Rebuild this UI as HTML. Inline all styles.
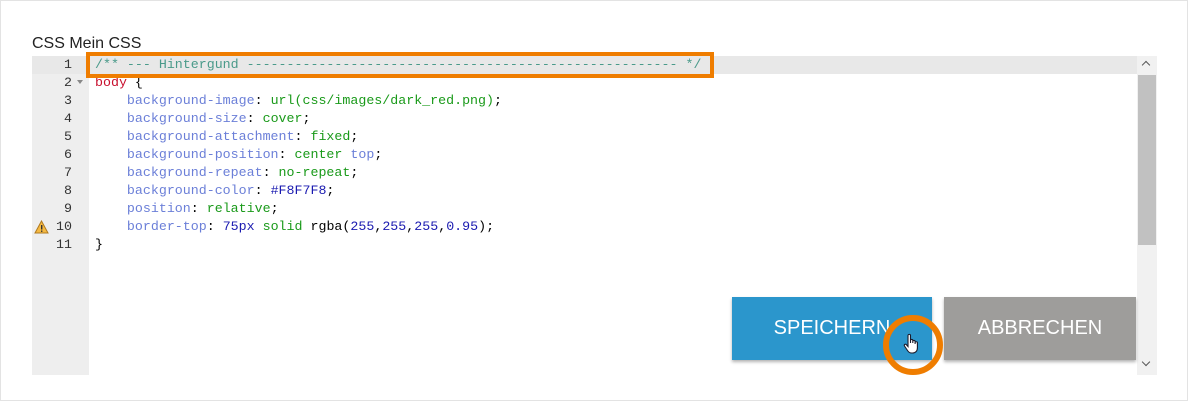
<!DOCTYPE html>
<html><head><style>
body{margin:0;width:1189px;height:402px;background:#fff;position:relative;overflow:hidden;font-family:"Liberation Sans",sans-serif}
.outer{position:absolute;left:0;top:0;width:1186px;height:399px;border:1px solid #e3e3e3}
.title{position:absolute;left:32px;top:35px;font-size:16px;color:#222}
.ed{position:absolute;left:32px;top:56px;width:1125px;height:319px;background:#fff}
.gut{position:absolute;left:0;top:0;width:57px;height:319px;background:#eee}
.hl{position:absolute;left:0;top:0;width:1105px;height:18px;background:#e8e8e8}
.ln{position:absolute;left:0;width:40px;text-align:right;font:13.3px/18px "Liberation Mono",monospace;color:#333}
.code{position:absolute;left:63px;top:0;font:13.3px/18px "Liberation Mono",monospace;white-space:pre;color:#000}
.c{color:#4a9a8a}.k{color:#c8102e}.p{color:#6b7fd8}.v{color:#1a9a1a}.n{color:#1a1ab0}
.sb{position:absolute;left:1105px;top:0;width:20px;height:319px;background:#f1f1f1}
.th{position:absolute;left:1px;top:19px;width:18px;height:170px;background:#c1c1c1}
.btn{position:absolute;top:297px;height:63px;color:#fff;font-size:20px;display:flex;align-items:center;justify-content:center;box-shadow:0 2px 3px rgba(0,0,0,.3)}
</style></head><body>
<div class="outer"></div>
<div class="title">CSS Mein CSS</div>
<div class="ed">
<div class="gut"></div>
<div class="hl"></div>
<div class="ln" style="top:0">1</div>
<div class="ln" style="top:18px">2</div>
<div style="position:absolute;left:45px;top:24px;width:0;height:0;border-left:3px solid transparent;border-right:3px solid transparent;border-top:4px solid #888"></div>
<div class="ln" style="top:36px">3</div>
<div class="ln" style="top:54px">4</div>
<div class="ln" style="top:72px">5</div>
<div class="ln" style="top:90px">6</div>
<div class="ln" style="top:108px">7</div>
<div class="ln" style="top:126px">8</div>
<div class="ln" style="top:144px">9</div>
<div class="ln" style="top:162px">10</div>
<svg style="position:absolute;left:2px;top:164px" width="15" height="14" viewBox="0 0 15 14"><path d="M7.5 1L14 13H1Z" fill="#f5b942" stroke="#b07a20"/><rect x="7" y="5" width="1.4" height="4.5" fill="#333"/><rect x="7" y="10.5" width="1.4" height="1.4" fill="#333"/></svg>
<div class="ln" style="top:180px">11</div>
<div class="code"><span class="c">/** --- Hintergund ------------------------------------------------------ */</span>
<span class="k">body</span> {
    <span class="p">background-image</span>: <span class="v">url(css/images/dark_red.png)</span>;
    <span class="p">background-size</span>: <span class="v">cover</span>;
    <span class="p">background-attachment</span>: <span class="v">fixed</span>;
    <span class="p">background-position</span>: <span class="v">center</span> <span class="p">top</span>;
    <span class="p">background-repeat</span>: <span class="v">no-repeat</span>;
    <span class="p">background-color</span>: <span class="n">#F8F7F8</span>;
    <span class="p">position</span>: <span class="v">relative</span>;
    <span class="p">border-top</span>: <span class="n">75px</span> <span class="v">solid</span> rgba(<span class="n">255</span>,<span class="n">255</span>,<span class="n">255</span>,<span class="n">0.95</span>);
}</div>
<div class="sb"><div class="th"></div>
<div style="position:absolute;left:6px;top:6px;width:5px;height:5px;border-left:1.5px solid #555;border-top:1.5px solid #555;transform:rotate(45deg)"></div>
<div style="position:absolute;left:6px;top:303px;width:5px;height:5px;border-right:1.5px solid #555;border-bottom:1.5px solid #555;transform:rotate(45deg)"></div>
</div>
</div>
<div style="position:absolute;left:86px;top:52px;width:620px;height:18px;border:4px solid #ef7d00"></div>
<div class="btn" style="left:732px;width:200px;background:#2b96cc">SPEICHERN</div>
<div class="btn" style="left:944px;width:192px;background:#9e9d9b">ABBRECHEN</div>
<div style="position:absolute;left:883px;top:315px;width:48px;height:48px;border:6px solid #ef7d00;border-radius:50%"></div>
<svg style="position:absolute;left:902px;top:333px" width="20" height="22" viewBox="0 0 20 22"><path d="M6 2.5c0-1.5 2.5-1.5 2.5 0V10V7.5c0-1.4 2.3-1.4 2.3 0V10V8.5c0-1.4 2.3-1.4 2.3 0V11V9.8c0-1.4 2.3-1.4 2.3 0V15c0 3-2 5-4.8 5H9.5C7.5 20 6.5 19 5.5 17.5L2.5 13c-.8-1.2.8-2.5 1.8-1.4L6 13.5Z" fill="#fff" stroke="#1a1a2a" stroke-width="1.1"/></svg>
</body></html>
